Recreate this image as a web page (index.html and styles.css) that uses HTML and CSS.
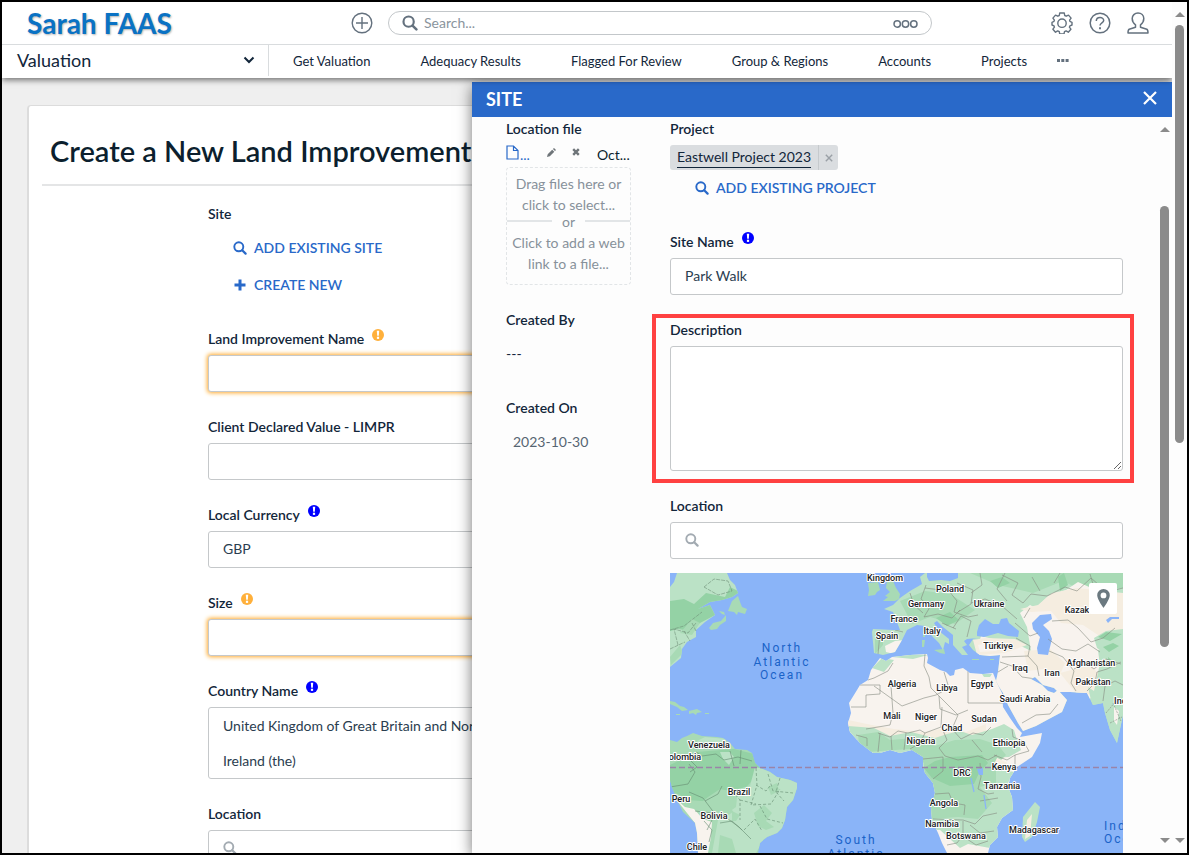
FILE: index.html
```html
<!DOCTYPE html>
<html lang="en">
<head>
<meta charset="utf-8">
<title>Create a New Land Improvement</title>
<link rel="stylesheet" href="styles.css">
</head>
<body>
<svg class="defs" aria-hidden="true">
  <symbol id="i-search" viewBox="0 0 14 14"><circle cx="5.8" cy="5.8" r="4.500" fill="none" stroke="currentColor" stroke-width="1.900"/><path d="M9.200 9.200l3.400 3.400" stroke="currentColor" stroke-width="2.200" stroke-linecap="round"/></symbol>
  <symbol id="i-alert" viewBox="0 0 12 12"><circle cx="6" cy="6" r="6" fill="currentColor"/><path d="M4.800 1.800h2.400l-.4 5H5.200z" fill="#fff"/><rect x="4.900" y="7.700" width="2.200" height="2.200" fill="#fff"/></symbol>
</svg>
<div class="frame">
  <div class="app">
    <header class="header">
      <div class="topbar">
        <a class="brand" href="#">Sarah FAAS</a>
        <button class="icon-btn add" aria-label="Add">
          <svg width="22" height="22" viewBox="0 0 22 22" fill="none" stroke="currentColor" stroke-width="1.400"><circle cx="11" cy="11" r="9.800"/><path d="M11 5v12M5 11h12"/></svg>
        </button>
        <label class="search">
          <svg class="search-icon" width="16" height="16"><use href="#i-search"/></svg>
          <input type="text" placeholder="Search..." aria-label="Search">
          <svg width="25" height="9" viewBox="0 0 25 9" fill="none" stroke="currentColor" stroke-width="1.500"><circle cx="4.200" cy="5" r="3.200"/><circle cx="12.500" cy="5" r="3.200"/><circle cx="20.800" cy="5" r="3.200"/></svg>
        </label>
        <div class="tools">
          <button class="icon-btn" aria-label="Settings">
            <svg width="22" height="22" viewBox="0 0 22 22" fill="none" stroke="currentColor" stroke-width="1.400" stroke-linejoin="round"><path d="M8.300 3.500 8.700 1h4.600l.4 2.500 1.500.7 2.300-1.100 2.600 3-1.500 2 .3 1.300 2.100.9v2.700l-2.100.8-.5 1.400 1.500 2-2.600 3-2.200-1.300-1.600.8-.5 2.300H8.700l-.4-2.300-1.600-.8-2.200 1.300-2.600-3 1.500-2-.4-1.400L1 13v-2.700l2-.9.400-1.300-1.500-2 2.600-3 2.300 1.100z"/><circle cx="11" cy="11.200" r="4.200"/></svg>
          </button>
          <button class="icon-btn" aria-label="Help">
            <svg width="22" height="22" viewBox="0 0 22 22" fill="none" stroke="currentColor" stroke-width="1.500"><circle cx="11" cy="11" r="9.800"/><path d="M7.300 9c0-4.600 7.400-4.400 7.400-.6 0 2.400-3.700 2.500-3.700 5.200"/><path d="M11 15.300v2" stroke-width="1.900"/></svg>
          </button>
          <button class="icon-btn" aria-label="Account">
            <svg width="22" height="22" viewBox="0 0 22 22" fill="none" stroke="currentColor" stroke-width="1.500" stroke-linejoin="round"><path d="M8.500 12.800C6.200 11.200 5.200 9 5.200 6.600 5.200 3.400 7.700 1 11 1s5.800 2.400 5.800 5.600c0 2.400-1 4.600-3.300 6.200v2.400l6.300 2.100c.9.400 1.200 1.500 1.200 3.700H1c0-2.200.3-3.300 1.200-3.700l6.300-2.100z"/></svg>
          </button>
        </div>
      </div>
      <nav class="nav">
        <button class="workspace">Valuation
          <svg width="12" height="8" viewBox="0 0 12 8" fill="none" stroke="currentColor" stroke-width="2"><path d="M1.500 1.500 6 6l4.500-4.500"/></svg>
        </button>
        <a href="#">Get Valuation</a><a href="#">Adequacy Results</a><a href="#">Flagged For Review</a><a href="#">Group &amp; Regions</a><a href="#">Accounts</a><a href="#">Projects</a>
        <button class="more" aria-label="More"><svg width="12" height="3" viewBox="0 0 12 3" fill="currentColor"><path d="M0 0h3v3H0zM4.300 0h3v3h-3zM8.600 0h3v3h-3z"/></svg></button>
      </nav>
    </header>

    <main class="content">
      <section class="card">
        <h1>Create a New Land Improvement</h1>
        <form class="form">
          <div class="field">
            <span class="label">Site</span>
            <button type="button" class="link"><svg width="14" height="14"><use href="#i-search"/></svg>ADD EXISTING SITE</button>
            <button type="button" class="link"><svg width="14" height="14" viewBox="0 0 14 14"><path d="M7 1.500v11M1.500 7h11" stroke="currentColor" stroke-width="3"/></svg>CREATE NEW</button>
          </div>
          <div class="field">
            <label class="label" for="li-name">Land Improvement Name <svg class="alert warn"><use href="#i-alert"/></svg></label>
            <input class="box required" id="li-name" type="text">
          </div>
          <div class="field">
            <label class="label" for="declared">Client Declared Value - LIMPR</label>
            <input class="box" id="declared" type="text">
          </div>
          <div class="field">
            <label class="label" for="currency">Local Currency <svg class="alert"><use href="#i-alert"/></svg></label>
            <input class="box" id="currency" type="text" value="GBP">
          </div>
          <div class="field">
            <label class="label" for="size">Size <svg class="alert warn"><use href="#i-alert"/></svg></label>
            <input class="box required" id="size" type="text">
          </div>
          <div class="field">
            <label class="label" for="country">Country Name <svg class="alert"><use href="#i-alert"/></svg></label>
            <textarea class="box country" id="country" rows="2">United Kingdom of Great Britain and Northern
Ireland (the)</textarea>
          </div>
          <div class="field">
            <label class="label" for="loc">Location</label>
            <div class="box locate"><svg width="14" height="14"><use href="#i-search"/></svg><input id="loc" type="text"></div>
          </div>
        </form>
      </section>
    </main>

    <aside class="panel" aria-labelledby="panel-title">
      <div class="panel-head">
        <h2 id="panel-title">SITE</h2>
        <button aria-label="Close"><svg width="14" height="14" viewBox="0 0 14 14" stroke="currentColor" stroke-width="2.200"><path d="M1 1l12 12M13 1 1 13"/></svg></button>
      </div>
      <div class="panel-body">
        <div class="side">
          <div class="files">
            <span class="label">Location file</span>
            <div class="file-row">
              <a href="#"><svg width="13" height="15" viewBox="0 0 13 15" fill="none" stroke="currentColor" stroke-width="1.200"><path d="M1 1h6.500L12 5.500V14H1zM7.500 1v4.500H12"/></svg>...</a>
              <button aria-label="Edit"><svg width="9" height="9" viewBox="0 0 9 9" fill="currentColor"><path d="M0 9l.7-2.800L5.200 1.700l2.100 2.100L2.800 8.300zM5.900 1 7 0l2 2-1 1.100z"/></svg></button>
              <button aria-label="Remove"><svg width="8" height="8" viewBox="0 0 8 8" stroke="currentColor" stroke-width="2.400"><path d="M1.200 1.200l5.600 5.600M6.800 1.200 1.200 6.800"/></svg></button>
              <span>Oct...</span>
            </div>
            <div class="drop">
              <button>Drag files here or click to select...</button>
              <span class="or">or</span>
              <button>Click to add a web link to a file...</button>
            </div>
          </div>
          <div class="meta"><span class="label">Created By</span><span>---</span></div>
          <div class="meta date"><span class="label">Created On</span><span>2023-10-30</span></div>
        </div>
        <form class="main">
          <div class="field">
            <span class="label">Project</span>
            <div class="chip"><a href="#">Eastwell Project 2023</a><button type="button" aria-label="Remove project"><svg width="8" height="8" viewBox="0 0 8 8" stroke="currentColor" stroke-width="1.400"><path d="M.8.8l6.400 6.400M7.200.8.8 7.200"/></svg></button></div>
            <button type="button" class="link"><svg width="14" height="14"><use href="#i-search"/></svg>ADD EXISTING PROJECT</button>
          </div>
          <div class="field">
            <label class="label" for="site-name">Site Name <svg class="alert"><use href="#i-alert"/></svg></label>
            <input class="box" id="site-name" type="text" value="Park Walk">
          </div>
          <div class="field highlight">
            <label class="label" for="desc">Description</label>
            <textarea class="box desc" id="desc"></textarea>
          </div>
          <div class="field">
            <label class="label" for="site-loc">Location</label>
            <div class="box locate"><svg width="14" height="14"><use href="#i-search"/></svg><input id="site-loc" type="text"></div>
            <div class="map">
              <svg viewBox="0 0 453 280" preserveAspectRatio="xMidYMin slice" role="img" aria-label="World map">
                <defs>
                  <clipPath id="c-af"><path d="M207 89L210 85 216 88 222 84 240 82 257 81 258 85 257 90 270 97 276 99 280 103 284 102 285 97 293 95 300 100 313 101 323 100 327 110 332 120 333 134 340 145 347 155 352 160 350 164 372 160 370 170 362 184 347 194 340 205 338 214 342 224 343 237 332 245 327 254 328 264 320 272 318 280H277L272 270 268 260 262 247 261 234 265 220 263 210 255 200 253 192 253 184 242 177 230 180 220 177 210 180 203 180 190 170 180 159 178 150 181 140 179 130 187 117 190 112 198 107 201 97z"/></clipPath>
                  <clipPath id="c-eu"><path d="M202 59L203 56 223 57 230 57 227 49 223 39 214 36 223 32 230 25 240 18 247 14 252 11 250 4 255 0H453V142L447 170 440 157 435 140 433 130 423 132 417 120 400 119 388 119 384 115 373 112 365 104 361 106 372 112 378 118 384 120 388 117 397 127 392 139 377 147 366 153 353 158 348 150 338 132 333 120 328 112 326 108 328 99 330 82 320 83 310 82 303 77 299 72 303 66 308 65 297 66 294 68 297 72 292 74 298 82 292 82 283 72 283 62 273 54 267 48 264 50 269 58 279 66 279 71 275 69 273 77 269 70 262 63 255 53 247 52 237 57 232 67 225 79 213 82 204 80z"/></clipPath>
                  <clipPath id="c-sa"><path d="M0 167L7 169 12 165 17 163 23 160 32 163 47 164 53 165 60 170 65 176 77 177 82 180 85 190 90 195 100 199 107 204 120 207 127 210 127 215 123 227 117 234 115 247 112 255 107 260 97 264 90 270 88 280H28L27 260 25 250 13 239 8 229 2 214 0 207z"/></clipPath>
                  <clipPath id="c-na"><path d="M0 14L4 9 7 0H57L60 7 65 12 68 20 62 24 52 27 40 29 28 36 40 32 45 42 35 49 26 57 26 64 17 69 12 76 11 85 0 94z"/></clipPath>
                </defs>
                <rect width="453" height="280" fill="#8ab4f8"/>
                <g clip-path="url(#c-na)">
                  <rect width="90" height="100" fill="#bbe2c6"/>
                  <path d="M0 28L14 26 24 31 36 20 55 24 60 14 68 18V30L30 50 20 58 8 56 0 58z" fill="#94d2a5"/><path d="M10 60l12-14 8 4-8 12zM0 84l10-12 3 8-12 12z" fill="#a8dab5"/>
                </g>
                <g fill="#a8dab5"><path d="M62 28l6-5 2 6 2 5 5 2-2 5-7-2-1 3-3-3-6-1zM39 55l4-5 8-2 5-6v6l-6 4-3 4-6 1zM49 38l5 1 1 3-3-1zM0 128l5 1 5 4 4 1 4 3-6 1-5-4-7-3zM19 138l8-2 5 3-5 1-1 2-3-2-4 1zM35 140h4v1h-4zM6 141h4v1H6zM198 10l10-1 2 8-3 2-2 3-7 1 1-6zM213 28l5-4-3-1 5-4-4-4 1-7h6l3 7 4 6-1 5-4 2zM264 77l10-1 1 5-5-1zM252 67h3l-1 7h-2zM253 59h2v5h-2zM302 86h7v1h-7zM320 86h4v1h-4z"/></g>
                <g clip-path="url(#c-sa)">
                  <rect y="155" width="130" height="125" fill="#a8dab5"/>
                  <path d="M0 192l26-13 38-3 20 5 6 14-10 15-12 12-10 1-14 8-12-3-14-1-10-6-8-2z" fill="#94d2a5"/>
                  <path d="M85 194l45 10-14 58-22 4-8 14H42l6-33 18-13 2-18 12-3zM35 164l22 2-8 9-14 0-8-7zM50 179l10 0 4 5-5 8-6-6z" fill="#bbe2c6"/>
                  <path d="M38 224l12-8 10 2-2 9 5 12-12 8-10-8-14-6z" fill="#a8dab5"/><path d="M62 238l8 4-4 6-4 0zM50 262l12 4 4 14H48z" fill="#a8dab5"/>
                  <path d="M5 225l10 9 9 2 9 10 9 3-1 15-3 16H20l5-30z" fill="#f8f3ee"/>
                  <path d="M84 240l10-8 8 8-6 8 8 6-8 3-8-4zM98 214l9-4 2 8-8 4z" fill="#a8dab5"/>
                  <path d="M26 179l6 4 14-2 8 6 14-3 14 4M0 214l18-3 7-12-6-8M19 219l14 6 12 16-8 16M25 238l26 3 18 13 12 12M50 250l12-2 10 9M60 178l4 15M71 177l-1 14M5 184l14 2 8 8-7 5M35 228l13-7 4-8M34 248l8 9-3 12" fill="none" stroke="#648b70" stroke-width=".6"/>
                  <path d="M86 195l1 17-6 20 20-1 9-15M98 201l5 17 20 2M90 233l7 13 16 4M74 257l11-11 7 12M70 227l16 4M62 218l8 9v20M86 212l10 6 4-5M110 205l-4 14 8 9" fill="none" stroke="#648b70" stroke-width=".6" stroke-dasharray="3 2"/>
                </g>
                <g clip-path="url(#c-eu)">
                  <rect x="195" width="260" height="175" fill="#bbe2c6"/>
                  <path d="M230 28l25-10 25 3 25 16-20 14-25-7-18 7zM300 0h153v15l-40 3-20-10-30 12-35-8zM205 60h8v12l-8 9z" fill="#a8dab5"/>
                  <path d="M320 8l12-4 8 6-12 5zM388 4l6-4 4 12-8 6zM266 45l14-6 9 8-12 6z" fill="#94d2a5"/>
                  <path d="M350 40l10-8 6 3 12-12 18-6 12-8 18 8 27 4v48l-25 8 5 40-30 20-60 40-20-20-10-60-10-4 8-30 40 10 10 5-4-24z" fill="#f8f3ee"/>
                  <path d="M350 36l18-4 14-12 25-5 46 5v37l-22 7-18-12-22-2-10-12-20 1zM303 67l12-2 30 1 12 6-22 8-28 2zM354 78l26-2 15 14-6 14-15-8-16 2zM390 100l30-8 12 12-6 18-20-2z" fill="#f5ede0"/>
                  <path d="M308 72l14-3 12 4-8 5-16 1z" fill="#f8f3ee"/>
                  <path d="M424 65l12-7 17-2v18l-20 5-6-4zM430 90l8-6 6 14 9 4v68h-14l-7-36-10-2-4-18 6 4zM440 128h13v28l-7 4z" fill="#bbe2c6"/>
                  <path d="M444 134l5 4-2 14-3-4z" fill="#f8f3ee"/>
                  <path d="M428 64l8-5 16 2-12 7zM433 74l10-4 6 3-10 6zM438 84l8 7-7 4z" fill="#94d2a5"/>
                  <path d="M215 73l10-5 9-1-2 9-8 5-8-2z" fill="#f8f3ee"/>
                  <path d="M307 59l2-7 6-6 8 5h6l2-5 6-1 2 5 10 8-1 6-10-1-10-3-14 4-7-1zM362 50l8-8 11-1 1 5-9 6 6 6 3 8-4 16-10-1-1-6 3-11-7-8zM257 0h31v5l-8 3-9-1-12 1-2-4zM436 47l4-3h9v2h-7l-4 4z" fill="#8ab4f8"/>
                </g>
                <g clip-path="url(#c-af)">
                  <rect x="170" y="75" width="210" height="205" fill="#f8f3ee"/>
                  <path d="M178 147l24 5 22 4 30 3 22-4 20 4 20-8v16H178z" fill="#f5ede0"/>
                  <path d="M178 153l26 2 16 8 21-4 24 6 12-4 13-3 12 4 20-6 12-5 10 6 3 10 4 10-12 7-14 1 4 11 20 4v60l-15 5-14 10-22-4-8 4-20-18H250V190h-75z" fill="#bbe2c6"/>
                  <path d="M188 162l20-3 12 8 25-2 20 8 20-6 25-1 18 6 8 10-10 10v18l-16 4 12 16-14 16-20-2-26 2-8-10V190l-14-14-30 2-20 2z" fill="#a8dab5"/>
                  <path d="M265 188l15-4 32-2 6 8-9 10-5 11-24 2-18-8-8-10z" fill="#94d2a5"/>
                  <path d="M202 95l10-10 12 2-10 12zM222 84l20-3 16 1-15 4zM312 101h10l-2 3h-6zM300 262l18-6 10 4-12 14z" fill="#bbe2c6"/>
                  <path d="M340 211l8-11M326 187l10 5" stroke="#f5ede0" stroke-width="5"/>
                  <path d="M198 107l6-2 14-7 5-8M190 112h20v9l-14 1v12H181M204 113l28 20 22-8 12-3 13-7-5-16M196 156l24-4 3-12-2-27M255 81l-1 12 5 11 2 11 27 27M298 98v32h38M272 134l-1 20-16 6-5-3-12 3-10-2-8 6-12-4M269 123l1 13 16 6 12-5M236 160l-2 17M221 163l1 14M210 160l-2 19M186 162l11 3v8M255 160l-5 10-10 6M272 155l5 12-8 8 6 8 13 4 20-4 10 4 9-5M288 142l-6 14 9 10 12-6 10 2 8-8M302 167l10 12M324 182l13 5 8-5 14-4-6-10-10-4-1-8M253 186l20-2v14l-10 8M265 221l14-1 4 10 12 2-1 10M310 190l1 14-3 12 10 5 6-1M263 246l30 1 12 4 8-8 14-3M293 248v14l-6 8-10 2M300 252l10 8 14-2M345 182v12M310 228l18-3M291 262l15 10 12-4" fill="none" stroke="#858980" stroke-width=".6"/>
                </g>
                <g clip-path="url(#c-eu)" fill="none" stroke="#858980" stroke-width=".6">
                  <path d="M210 60l-2 21M225 57l8 2M240 20l4 12 9 8M256 12l-5 14 9 8-6 10 14-3 14 4 8-8M255 15l24 3 8 10-3 11 14 5 10-2M287 10l16 7-2 14-13 8M283 55l8-12 10 5-4 16M272 50l14 6M301 30l14-4 17 7 15 13M310 0l2 12-11 8M335 0l-8 16 10 12M332 2l16 8-6 12 11 8 8-9 16 2 18-9 12 4 14-13 16 14 16-4 10 2M345 50l15 13 8-3M346 65l14 8-2 10-26 1M358 83l9 10 2 10M330 89l12 4 10 11 14 2M328 99l10-6M352 150l14-8 14-1 8-10M382 48l16-1 10 8 13 14 12-4 12-10M379 78l14 6 11 14-3 12 5 8M404 96l12-6 8 6 12-10 15 5M417 118l8-8 2-11 10-3 14-7M433 128l2-15 10-5 8 4M378 66l14 10 14 2 12-7 12 8M360 35l-6 10M362 4l8 14M390 0l-6 10M420 1l3 10"/>
                  <path d="M436 140l10-12M440 150l12-6M443 130l8 18" stroke-dasharray="2 1"/>
                </g>
                <path d="M0 57l14-4 18-14M8 72l-4-16 14 4 8-10M0 76l15-7M34 14l10-8 14 2 4 10-14 4zM14 58l6 10M22 50l4 8" fill="none" stroke="#709079" stroke-width=".6" stroke-dasharray="4 1"/>
                <path d="M353 244l12-15 5 5-3 15-5 15-7 5-3-5z" fill="#bbe2c6"/><path d="M357 247l5-6-2 22-5 3z" fill="#f5ede0"/>
                <path d="M307 196l6-1v7h-4z" fill="#8ab4f8"/><path d="M301 205l3 14M314 222l2 14" stroke="#8ab4f8" stroke-width="1.300"/>
                <path d="M0 194.500H453" stroke="#9a84a8" stroke-width="1.500" stroke-dasharray="6 3"/>
                <g class="ocean">
                  <text x="112" y="79">North</text><text x="112" y="93">Atlantic</text><text x="112" y="106">Ocean</text>
                  <text x="186" y="271">South</text><text x="186" y="285">Atlantic</text>
                  <text class="start" x="434" y="257">Indian</text><text class="start" x="434" y="270">Ocean</text>
                </g>
                <g class="places">
                  <text x="215" y="8">Kingdom</text><text x="280" y="19">Poland</text><text x="256" y="34">Germany</text><text x="319" y="34">Ukraine</text><text x="234" y="49">France</text><text x="262" y="61">Italy</text><text x="217" y="66">Spain</text><text x="407" y="40">Kazak</text><text x="328" y="76">Türkiye</text><text x="350" y="98">Iraq</text><text x="382" y="103">Iran</text><text x="421" y="93">Afghanistan</text><text x="423" y="112">Pakistan</text><text x="232" y="114">Algeria</text><text x="277" y="118">Libya</text><text x="312" y="114">Egypt</text><text x="355" y="129">Saudi Arabia</text><text x="454" y="131">India</text><text x="222" y="146">Mali</text><text x="256" y="147">Niger</text><text x="282" y="158">Chad</text><text x="314" y="149">Sudan</text><text x="251" y="171">Nigeria</text><text x="339" y="173">Ethiopia</text><text x="334" y="197">Kenya</text><text x="292" y="203">DRC</text><text x="332" y="216">Tanzania</text><text x="274" y="233">Angola</text><text x="272" y="254">Namibia</text><text x="296" y="266">Botswana</text><text x="364" y="260">Madagascar</text><text x="39" y="175">Venezuela</text><text x="12" y="187">Colombia</text><text x="69" y="222">Brazil</text><text x="11" y="229">Peru</text><text x="44" y="246">Bolivia</text><text x="27" y="277">Chile</text>
                </g>
              </svg>
              <button type="button" class="pin" aria-label="Drop pin"><svg width="13" height="19" viewBox="0 0 13 19" fill="currentColor"><path fill-rule="evenodd" d="M6.500 0A6.300 6.300 0 0 0 .2 6.300C.2 10.500 6.500 19 6.500 19s6.300-8.500 6.300-12.700A6.300 6.300 0 0 0 6.500 0zm0 3.500a2.900 2.900 0 1 1 0 5.800 2.900 2.900 0 0 1 0-5.800z"/></svg></button>
            </div>
          </div>
        </form>
        <div class="scrollbar inner"><i class="up"></i><b></b><i class="down"></i></div>
      </div>
    </aside>
  </div>
  <div class="scrollbar outer"><i class="up"></i><b></b><i class="down"></i></div>
</div>
</body>
</html>
```
FILE: styles.css
```css
* { box-sizing: border-box; }
body { margin: 0; font: 14px/20px Lato, "Open Sans", sans-serif; color: #12263a; }
button, input, textarea { font: inherit; color: inherit; }
button { border: 0; padding: 0; background: none; cursor: pointer; }
a { color: inherit; text-decoration: none; }
h1, h2 { margin: 0; }
svg { display: block; flex: none; }
.defs { position: absolute; width: 0; height: 0; }

.frame { display: flex; height: 100vh; border: 2px solid #000; overflow: hidden; background: #fdfdfd; }
.app { position: relative; flex: 1; min-width: 0; display: flex; flex-direction: column; background: #efefef; overflow: hidden; }

.header { position: relative; z-index: 3; background: #fff; box-shadow: 0 2px 6px rgba(0, 0, 0, .55); }
.topbar { display: flex; align-items: center; height: 43px; padding: 0 23px 0 25px; border-bottom: 1px solid #d9dcde; color: #64717e; }
.brand { width: 324px; font-size: 28px; font-weight: 700; line-height: 40px; color: #0a72c4; text-shadow: 1px 1px 2px rgba(0, 0, 0, .3); }
.icon-btn { color: #64717e; }
.search { display: flex; align-items: center; gap: 6px; width: 544px; height: 24px; margin-left: 15px; padding: 0 13px; border: 1px solid #c3c7ca; border-radius: 12px; }
.search input { flex: 1; min-width: 0; border: 0; padding: 0; outline: 0; background: none; }
.search input::placeholder { color: #8a949d; opacity: 1; }
.tools { display: flex; gap: 16px; margin-left: auto; }
.nav { display: flex; align-items: center; gap: 50px; height: 33px; padding-bottom: 2px; font-size: 13px; white-space: nowrap; }
.workspace { display: flex; align-items: center; justify-content: space-between; width: 267px; height: 31px; margin-right: -26px; padding: 0 13px 2px 15px; border-right: 1px solid #d9dcde; font-size: 18px; }
.more { margin-left: -20px; color: #64717e; }

.content { flex: 1; min-height: 0; padding: 27px 25px 0; }
.card { height: 900px; padding: 24px 13px; border: 1px solid #dcdcdc; border-left-width: 2px; border-radius: 4px; background: #fff; }
h1 { padding: 0 8px 12px; border-bottom: 2px solid #e4e5e6; font-size: 29px; line-height: 42px; font-weight: 600; color: #0c1f2e; }
.form { display: flex; flex-direction: column; gap: 25px; width: 640px; padding: 18px 0 0 166px; }
.field { display: flex; flex-direction: column; align-items: stretch; }
.label { display: flex; gap: 8px; margin-bottom: 6px; font-weight: 600; }
.alert { width: 12px; height: 12px; color: #00f; }
.warn { color: #ffb03b; }
.link { display: flex; align-items: center; align-self: flex-start; gap: 7px; height: 37px; margin-left: 25px; font-weight: 600; color: #2969c9; }
.form .link { margin-top: -1px; margin-bottom: 1px; }
.box { width: 100%; height: 37px; padding: 0 14px 2px; border: 1px solid #c5c8ca; border-radius: 3px; background: #fff; outline: 0; color: #2a3d4f; }
.required { box-shadow: 0 0 4px 1px #ffab2e; }
.country { height: 72px; line-height: 35px; padding: 0 14px; resize: none; overflow: hidden; }
.locate { display: flex; align-items: center; gap: 8px; color: #a3abb2; }
.locate input { flex: 1; min-width: 0; border: 0; outline: 0; background: none; }

.panel { position: absolute; z-index: 2; top: 80px; right: 0; bottom: 0; width: 700px; display: flex; flex-direction: column; background: #fdfdfd; box-shadow: 0 4px 14px rgba(0, 0, 0, .55); }
.panel-head { display: flex; align-items: center; justify-content: space-between; height: 35px; flex: none; padding: 0 15px 0 14px; background: #2969c9; color: #fff; }
.panel-head button { padding-bottom: 3px; color: #fff; }
h2 { font-size: 18px; line-height: 35px; font-weight: 700; }
.panel-body { flex: 1; min-height: 0; display: flex; padding: 2px 0 0 34px; }
.side { width: 125px; flex: none; }
.main { flex: 1; min-width: 0; display: flex; flex-direction: column; gap: 25px; margin: 0 34px 0 39px; }
.side .label { margin: 0; }
.file-row { display: flex; align-items: center; height: 20px; margin: 6px 0 2px; color: #0c1f2e; }
.file-row a { display: flex; width: 41px; gap: 1px; color: #2969c9; }
.file-row button { width: 25px; height: 15px; color: #6f7579; display: flex; }
.drop { display: flex; flex-direction: column; height: 118px; border: 1px dashed #e2e5e7; border-radius: 4px; color: #87919a; text-align: center; line-height: 21px; }
.drop button { padding-top: 5px; }
.or { display: flex; align-items: center; gap: 10px; height: 12px; }
.or::before, .or::after { content: ""; flex: 1; height: 2px; background: #e2e5e7; }
.meta { display: flex; flex-direction: column; gap: 14px; margin-top: 25px; height: 63px; }
.date span + span { padding-left: 7px; color: #566572; }
.chip { display: flex; align-self: flex-start; height: 25px; border-radius: 3px; background: #dadde0; }
.chip a { margin: 2px 7px; border-bottom: 1px solid #12263a; }
.chip button { display: grid; place-items: center; width: 20px; border-left: 1px solid #c6cacd; color: #9aa0a6; }
.main .link { padding-bottom: 1px; }
.highlight { position: relative; }
.highlight::after { content: ""; position: absolute; inset: -6px -11px -12px -18px; border: 4px solid #ff4141; pointer-events: none; }
.desc { height: 125px; padding: 8px 14px; resize: vertical; }
.map { position: relative; height: 280px; margin-top: 14px; overflow: hidden; }
.map > svg { width: 100%; height: 100%; }
.pin { position: absolute; top: 10px; right: 6px; width: 28px; height: 31px; display: grid; place-items: center; border-radius: 2px; background: #fff; color: #6b7980; }
.places { font: 500 9px Roboto, sans-serif; fill: #202124; stroke: #fff; stroke-width: 2px; stroke-linejoin: round; paint-order: stroke; text-anchor: middle; }
.ocean { font: 12px Roboto, sans-serif; letter-spacing: 2px; fill: #1a63c8; text-anchor: middle; }
.ocean .start { text-anchor: start; }

.scrollbar { display: flex; flex-direction: column; align-items: center; width: 15px; flex: none; }
.scrollbar b { width: 9px; border-radius: 5px; background: #8b8b8b; }
.scrollbar i { border: 5px solid transparent; }
.up { border-top: 0 !important; border-bottom-color: #8b8b8b !important; }
.down { margin-top: auto; border-bottom: 0 !important; border-top-color: #8b8b8b !important; }
.outer { padding: 10px 0; }
.outer b { height: 418px; margin-top: 8px; }
.inner { padding: 8px 0 10px; }
.inner b { height: 441px; margin-top: 74px; }
```
